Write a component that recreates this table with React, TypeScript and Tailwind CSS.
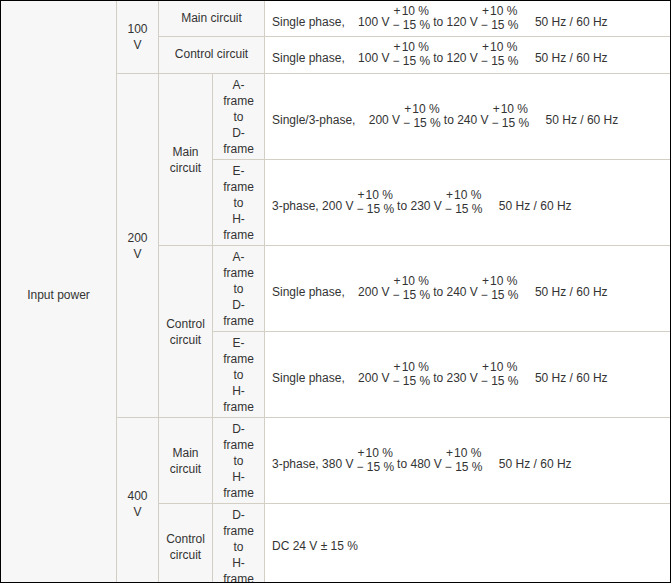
const sp = "\u00a0\u00a0\u00a0\u00a0";

// + 10 % over − 15 % stack
function Tol() {
  return (
    <span className="mx-[3px] inline-block text-center align-[-3px] leading-[14px]">
      +{"\u200a"}10 %
      <br />− 15 %
    </span>
  );
}

function Head({ lines, className = "" }: { lines: string[]; className?: string }) {
  return (
    <div className={`flex flex-col items-center justify-center bg-[#f7f7f7] text-center ${className}`}>
      {lines.map((l, i) => (
        <span key={i}>{l}</span>
      ))}
    </div>
  );
}

function Data({ children, className = "" }: { children: React.ReactNode; className?: string }) {
  return <div className={`flex items-center whitespace-nowrap bg-white pb-[2px] pl-[7px] ${className}`}><div>{children}</div></div>;
}

const frameAD = ["A-", "frame", "to", "D-", "frame"];
const frameEH = ["E-", "frame", "to", "H-", "frame"];
const frameDH = ["D-", "frame", "to", "H-", "frame"];

export default function App() {
  return (
    <div className="h-[584px] w-[672px] bg-white">
      <div
        className="h-[583px] w-[671px] overflow-hidden border border-black text-[12px] leading-[16px] text-[#333]"
        style={{ fontFamily: '"Liberation Sans", Arial, sans-serif' }}
      >
        <div className="grid grid-cols-[115px_41px_53px_51px_1fr] grid-rows-[35px_36px_85px_85px_85px_85px_85px_85px] gap-px bg-[#d3cfc5]">
          <Head lines={["Input power"]} className="col-start-1 row-span-8 row-start-1" />

          <Head lines={["100", "V"]} className="col-start-2 row-span-2 row-start-1" />
          <Head lines={["Main circuit"]} className="col-span-2 col-start-3 row-start-1 pb-[2px]" />
          <Data className="col-start-5 row-start-1">
            Single phase,{sp}100 V<Tol />to 120 V<Tol />{sp}50 Hz / 60 Hz
          </Data>
          <Head lines={["Control circuit"]} className="col-span-2 col-start-3 row-start-2 pb-[2px]" />
          <Data className="col-start-5 row-start-2">
            Single phase,{sp}100 V<Tol />to 120 V<Tol />{sp}50 Hz / 60 Hz
          </Data>

          <Head lines={["200", "V"]} className="col-start-2 row-span-4 row-start-3" />
          <Head lines={["Main", "circuit"]} className="col-start-3 row-span-2 row-start-3" />
          <Head lines={frameAD} className="col-start-4 row-start-3" />
          <Data className="col-start-5 row-start-3">
            Single/3-phase,{sp}200 V<Tol />to 240 V<Tol />{sp}50 Hz / 60 Hz
          </Data>
          <Head lines={frameEH} className="col-start-4 row-start-4" />
          <Data className="col-start-5 row-start-4">
            3-phase, 200 V<Tol />to 230 V<Tol />{sp}50 Hz / 60 Hz
          </Data>
          <Head lines={["Control", "circuit"]} className="col-start-3 row-span-2 row-start-5" />
          <Head lines={frameAD} className="col-start-4 row-start-5" />
          <Data className="col-start-5 row-start-5">
            Single phase,{sp}200 V<Tol />to 240 V<Tol />{sp}50 Hz / 60 Hz
          </Data>
          <Head lines={frameEH} className="col-start-4 row-start-6" />
          <Data className="col-start-5 row-start-6">
            Single phase,{sp}200 V<Tol />to 230 V<Tol />{sp}50 Hz / 60 Hz
          </Data>

          <Head lines={["400", "V"]} className="col-start-2 row-span-2 row-start-7" />
          <Head lines={["Main", "circuit"]} className="col-start-3 row-start-7" />
          <Head lines={frameDH} className="col-start-4 row-start-7" />
          <Data className="col-start-5 row-start-7">
            3-phase, 380 V<Tol />to 480 V<Tol />{sp}50 Hz / 60 Hz
          </Data>
          <Head lines={["Control", "circuit"]} className="col-start-3 row-start-8" />
          <Head lines={frameDH} className="col-start-4 row-start-8" />
          <Data className="col-start-5 row-start-8">DC 24 V ± 15 %</Data>
        </div>
      </div>
    </div>
  );
}
